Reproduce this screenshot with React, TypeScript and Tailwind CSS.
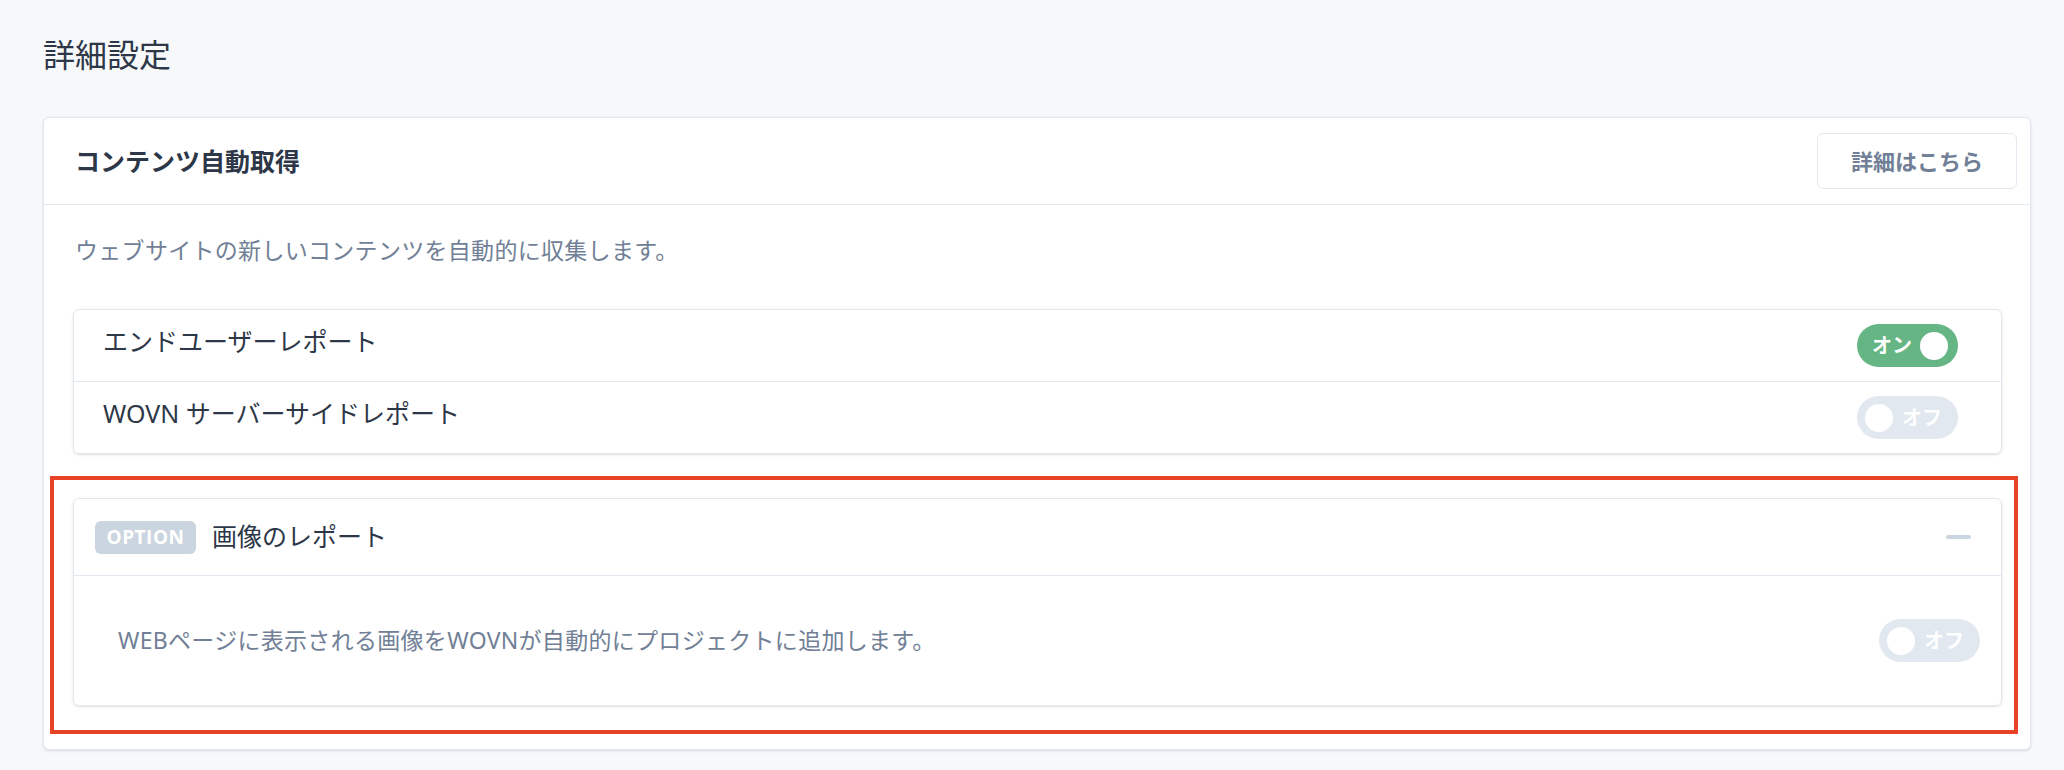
import React from "react";

const jp = "font-['Noto_Sans','Noto_Sans_CJK_JP',sans-serif]";

function Toggle({ on }: { on: boolean }) {
  if (on) {
    return (
      <div className="flex h-[43px] w-[101px] items-center justify-between rounded-full bg-[#65b684] pl-[15px] pr-[10px]">
        <span className="text-[20px] font-bold leading-none text-white">オン</span>
        <span className="h-[28px] w-[28px] rounded-full bg-white" />
      </div>
    );
  }
  return (
    <div className="flex h-[43px] w-[101px] items-center gap-[9px] rounded-full bg-[#e2e8f0] pl-[8px]">
      <span className="h-[28px] w-[28px] rounded-full bg-white" />
      <span className="text-[20px] font-bold leading-none text-white">オフ</span>
    </div>
  );
}

export default function App() {
  return (
    <div className={`min-h-screen bg-[#f7f8fa] pl-[43px] pr-[33px] pt-[35px] ${jp}`}>
      {/* Page title */}
      <h1 className="mb-[42px] text-[32px] font-normal leading-[40px] text-[#2d3748]">詳細設定</h1>

      <div className="rounded-md border border-[#e2e8f0] bg-white shadow-sm">
        {/* Card header */}
        <div className="flex h-[87px] items-center justify-between border-b border-[#e2e8f0] pl-[31px] pr-[13px]">
          <h2 className="text-[25px] font-bold leading-none text-[#2d3748]">コンテンツ自動取得</h2>
          <button className="flex h-[56px] w-[200px] items-center justify-center rounded-md border border-[#e2e8f0] bg-white text-[22px] font-bold text-[#718096]">
            詳細はこちら
          </button>
        </div>

        {/* Card body */}
        <div className="pb-[15px] pl-[29px] pr-[28px] pt-[29px]">
          <p className="pl-[2px] text-[23px] leading-[32px] tracking-[0.3px] text-[#718096]">
            ウェブサイトの新しいコンテンツを自動的に収集します。
          </p>

          <div className="mt-[43px] rounded-md border border-[#e2e8f0] shadow-sm">
            <div className="flex h-[72px] items-center justify-between border-b border-[#e2e8f0] pl-[29px] pr-[43px]">
              <span className="mb-[8px] text-[25px] text-[#2d3748]">エンドユーザーレポート</span>
              <Toggle on />
            </div>
            <div className="flex h-[71px] items-center justify-between pl-[29px] pr-[43px]">
              <span className="mb-[8px] text-[25px] text-[#2d3748]">WOVN サーバーサイドレポート</span>
              <Toggle on={false} />
            </div>
          </div>

          {/* highlighted option block */}
          <div className="-ml-[23px] -mr-[16px] mt-[22px] border-[4px] border-[#e84326] pb-[24px] pl-[19px] pr-[12px] pt-[18px]">
            <div className="rounded-md border border-[#e2e8f0] shadow-sm">
              <div className="flex h-[77px] items-center justify-between border-b border-[#e2e8f0] pl-[21px] pr-[30px]">
                <div className="flex items-center gap-4">
                  <span className="flex h-[33px] w-[101px] items-center justify-center rounded-md bg-[#cbd5e0] font-['Open_Sans',sans-serif] text-[19px] font-bold tracking-[0.5px] text-white">
                    OPTION
                  </span>
                  <span className="text-[25px] text-[#2d3748]">画像のレポート</span>
                </div>
                <span className="h-[4px] w-[25px] rounded-full bg-[#cbd5e0]" />
              </div>
              <div className="flex h-[129px] items-center justify-between pl-[44px] pr-[21px]">
                <span className="text-[23px] tracking-[0.3px] text-[#718096]">
                  WEBページに表示される画像をWOVNが自動的にプロジェクトに追加します。
                </span>
                <Toggle on={false} />
              </div>
            </div>
          </div>
        </div>
      </div>
    </div>
  );
}
